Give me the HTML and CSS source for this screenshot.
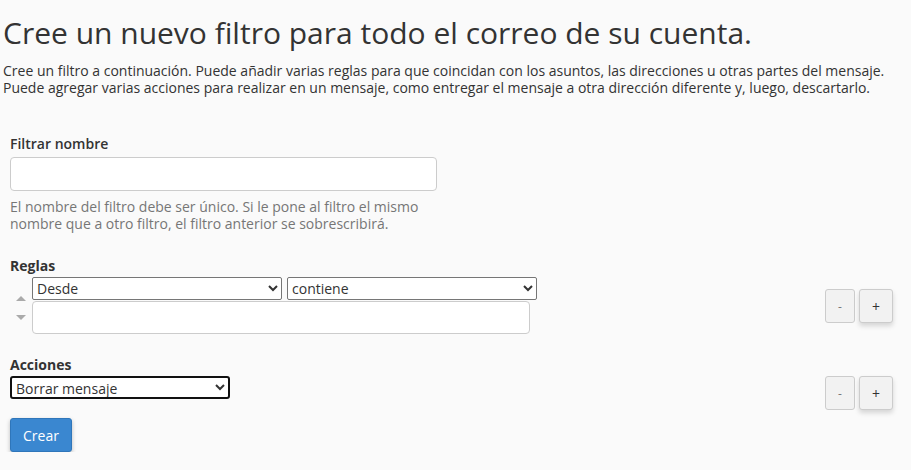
FILE: index.html
```html
<!DOCTYPE html>
<html lang="es">
<head>
  <meta charset="UTF-8">
  <title>Crear filtro</title>
  <link rel="stylesheet" href="styles.css">
</head>
<body>
  <div class="page-header">
    <h1>Cree un nuevo filtro para todo el correo de su cuenta.</h1>
    <p class="description">Cree un filtro a continuación. Puede añadir varias reglas para que coincidan con los asuntos, las direcciones u otras partes del mensaje.<br>Puede agregar varias acciones para realizar en un mensaje, como entregar el mensaje a otra dirección diferente y, luego, descartarlo.</p>
  </div>

  <form class="filter-form">
    <div class="form-group">
      <label for="filtername" class="name-label">Filtrar nombre</label>
      <input type="text" id="filtername" class="form-control">
      <p class="help-block">El nombre del filtro debe ser único. Si le pone al filtro el mismo<br>nombre que a otro filtro, el filtro anterior se sobrescribirá.</p>
    </div>

    <div class="form-group rules-group">
      <label>Reglas</label>
      <div class="rule-row">
        <div class="move-arrows">
          <span class="arrow-up"></span>
          <span class="arrow-down"></span>
        </div>
        <div class="rule-fields">
          <div class="rule-selects">
            <select class="part-select">
              <option>Desde</option>
            </select>
            <select class="match-select">
              <option>contiene</option>
            </select>
          </div>
          <input type="text" class="form-control rule-value">
        </div>
        <div class="row-buttons">
          <button type="button" class="btn-small">-</button>
          <button type="button" class="btn-small btn-add">+</button>
        </div>
      </div>
    </div>

    <div class="form-group actions-group">
      <label>Acciones</label>
      <div class="action-row">
        <select class="action-select">
          <option>Borrar mensaje</option>
        </select>
        <div class="row-buttons">
          <button type="button" class="btn-small">-</button>
          <button type="button" class="btn-small btn-add">+</button>
        </div>
      </div>
    </div>

    <button type="button" class="btn-primary">Crear</button>
  </form>
</body>
</html>
```

FILE: styles.css
```css
/* Estilos generales */
body {
  font-family: "Open Sans", Arial, sans-serif;
  background-color: #fafafa;
  color: #333;
  margin: 0;
  padding: 0 0 0 3px;
}

.page-header h1 {
  font-size: 30px;
  font-weight: 400;
  line-height: 36px;
  margin: 15px 0 11px 0;
}

.description {
  font-size: 14px;
  line-height: 17px;
  margin: 0;
}

.filter-form {
  padding: 38px 18px 0 7px;
}

.form-group {
  margin-bottom: 24px;
}

.form-group label {
  display: block;
  font-size: 14px;
  font-weight: 700;
  line-height: 19px;
  margin-bottom: 2px;
}

.form-group .name-label {
  font-weight: 600;
  margin-bottom: 4px;
}

.form-control {
  box-sizing: border-box;
  height: 34px;
  border: 1px solid #ccc;
  border-radius: 4px;
  background-color: #fff;
  font-family: inherit;
  font-size: 14px;
  padding: 6px 12px;
}

#filtername {
  width: 427px;
}

.help-block {
  color: #767676;
  font-size: 14px;
  line-height: 17px;
  margin: 7px 0 0 0;
}

select {
  box-sizing: border-box;
  height: 23px;
  font-family: inherit;
  font-size: 14px;
  color: #333;
  background-color: #fff;
  border: 1px solid #767676;
  border-radius: 2px;
}

.rule-row {
  display: flex;
  align-items: flex-start;
}

.move-arrows {
  width: 22px;
  display: flex;
  flex-direction: column;
  align-items: center;
  padding-top: 19px;
  gap: 14px;
}

.arrow-up {
  width: 0;
  height: 0;
  border-left: 5px solid transparent;
  border-right: 5px solid transparent;
  border-bottom: 5px solid #aaa;
}

.arrow-down {
  width: 0;
  height: 0;
  border-left: 5px solid transparent;
  border-right: 5px solid transparent;
  border-top: 5px solid #aaa;
}

.rule-fields {
  flex: 1;
}

.rule-selects {
  display: flex;
  gap: 5px;
  margin-bottom: 1px;
}

.part-select,
.match-select {
  width: 250px;
}

.rule-value {
  width: 498px;
  height: 33px;
}

.row-buttons {
  display: flex;
  gap: 4px;
  margin-top: 12px;
}

.rules-group {
  margin-bottom: 21px;
}

.actions-group {
  margin-bottom: 8px;
}

.actions-group label {
  margin-bottom: 2px;
}

.action-row {
  display: flex;
  justify-content: space-between;
  align-items: flex-start;
}

.action-row .row-buttons {
  margin-top: 0;
}

.action-select {
  width: 220px;
  border: 2px solid #111;
  border-radius: 3px;
}

.btn-small {
  box-sizing: border-box;
  width: 30px;
  height: 34px;
  background-color: #f2f2f2;
  border: 1px solid #ccc;
  border-radius: 3px;
  color: #777;
  font-family: inherit;
  font-size: 12px;
  padding: 0;
}

.btn-add {
  width: 34px;
  color: #333;
  font-size: 14px;
  box-shadow: 0 3px 5px rgba(0, 0, 0, 0.15);
}

.btn-primary {
  background-color: #3a87d0;
  border: 1px solid #2f76ba;
  border-radius: 3px;
  color: #fff;
  font-family: inherit;
  font-size: 14px;
  padding: 7px 12px;
  height: 34px;
  box-shadow: 0 2px 4px rgba(0, 0, 0, 0.25);
}
```
